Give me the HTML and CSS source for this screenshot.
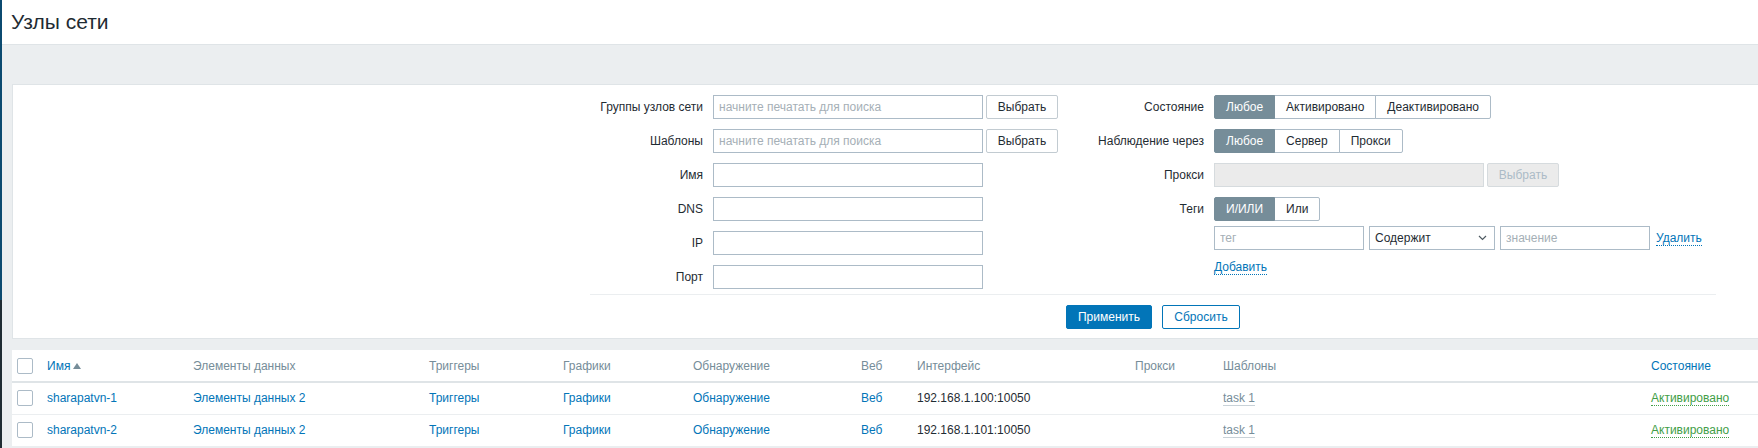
FILE: index.html
```html
<!DOCTYPE html>
<html lang="ru">
<head>
<meta charset="utf-8">
<title>Узлы сети</title>
<link rel="stylesheet" href="styles.css">
</head>
<body>
<div class="app">
  <div class="sidebar-edge"></div>
  <main class="main">
    <header class="page-header"><h1>Узлы сети</h1></header>
    <div class="content">
      <section class="filter">
        <div class="filter-form">
          <div class="filter-cols">
            <div class="col col-left">
              <div class="row"><label class="lbl">Группы узлов сети</label><input class="inp w270" placeholder="начните печатать для поиска"><button class="btn-grey">Выбрать</button></div>
              <div class="row"><label class="lbl">Шаблоны</label><input class="inp w270" placeholder="начните печатать для поиска"><button class="btn-grey">Выбрать</button></div>
              <div class="row"><label class="lbl">Имя</label><input class="inp w270"></div>
              <div class="row"><label class="lbl">DNS</label><input class="inp w270"></div>
              <div class="row"><label class="lbl">IP</label><input class="inp w270"></div>
              <div class="row"><label class="lbl">Порт</label><input class="inp w270"></div>
            </div>
            <div class="col col-right">
              <div class="row"><label class="lbl">Состояние</label>
                <div class="seg"><span class="on">Любое</span><span>Активировано</span><span>Деактивировано</span></div>
              </div>
              <div class="row"><label class="lbl">Наблюдение через</label>
                <div class="seg"><span class="on">Любое</span><span>Сервер</span><span>Прокси</span></div>
              </div>
              <div class="row"><label class="lbl">Прокси</label><input class="inp w270" disabled><button class="btn-grey" disabled>Выбрать</button></div>
              <div class="row row-top"><label class="lbl">Теги</label>
                <div class="tags">
                  <div class="seg"><span class="on">И/ИЛИ</span><span>Или</span></div>
                  <div class="tag-row">
                    <input class="inp w150" placeholder="тег">
                    <div class="select"><span>Содержит</span><svg width="9" height="6" viewBox="0 0 9 6"><path d="M1 1l3.5 3.5L8 1" fill="none" stroke="#4f5b62" stroke-width="1.2"/></svg></div>
                    <input class="inp w150" placeholder="значение">
                    <a class="link-action">Удалить</a>
                  </div>
                  <div class="add-row"><a class="link-action">Добавить</a></div>
                </div>
              </div>
            </div>
          </div>
          <div class="filter-actions">
            <button class="btn-primary">Применить</button>
            <button class="btn-alt">Сбросить</button>
          </div>
        </div>
      </section>

      <table class="list">
        <colgroup>
          <col style="width:30px"><col style="width:146px"><col style="width:236px"><col style="width:134px"><col style="width:130px"><col style="width:168px"><col style="width:56px"><col style="width:218px"><col style="width:88px"><col style="width:428px"><col style="width:200px"><col>
        </colgroup>
        <thead>
          <tr>
            <th><span class="cb"></span></th>
            <th><a class="link">Имя</a><span class="arrow-up"></span></th>
            <th>Элементы данных</th>
            <th>Триггеры</th>
            <th>Графики</th>
            <th>Обнаружение</th>
            <th>Веб</th>
            <th>Интерфейс</th>
            <th>Прокси</th>
            <th>Шаблоны</th>
            <th><a class="link">Состояние</a></th>
            <th></th>
          </tr>
        </thead>
        <tbody>
          <tr>
            <td><span class="cb"></span></td>
            <td><a class="link">sharapatvn-1</a></td>
            <td><a class="link">Элементы данных</a> <span class="count">2</span></td>
            <td><a class="link">Триггеры</a></td>
            <td><a class="link">Графики</a></td>
            <td><a class="link">Обнаружение</a></td>
            <td><a class="link">Веб</a></td>
            <td>192.168.1.100:10050</td>
            <td></td>
            <td><a class="link-grey">task 1</a></td>
            <td><a class="link-green">Активировано</a></td>
            <td></td>
          </tr>
          <tr>
            <td><span class="cb"></span></td>
            <td><a class="link">sharapatvn-2</a></td>
            <td><a class="link">Элементы данных</a> <span class="count">2</span></td>
            <td><a class="link">Триггеры</a></td>
            <td><a class="link">Графики</a></td>
            <td><a class="link">Обнаружение</a></td>
            <td><a class="link">Веб</a></td>
            <td>192.168.1.101:10050</td>
            <td></td>
            <td><a class="link-grey">task 1</a></td>
            <td><a class="link-green">Активировано</a></td>
            <td></td>
          </tr>
        </tbody>
      </table>
    </div>
  </main>
</div>
</body>
</html>
```
FILE: styles.css
```css
* { box-sizing: border-box; }
html, body { margin: 0; height: 100%; overflow: hidden; }
body {
  font-family: "Liberation Sans", Arial, sans-serif;
  font-size: 12px;
  color: #1f2c33;
  background: #ebeef0;
}
.app { display: flex; min-height: 100vh; }
.sidebar-edge {
  width: 2px;
  flex: none;
  background: linear-gradient(#0b4a70 0, #0b4a70 300px, #1f2c33 300px);
}
.main { flex: none; width: 2400px; background: #ebeef0; }

.page-header {
  height: 45px;
  background: #fff;
  border-bottom: 1px solid #dfe4e7;
  display: flex;
  align-items: center;
  padding-left: 9px;
}
.page-header h1 {
  margin: 0;
  font-size: 21px;
  font-weight: normal;
  line-height: 24px;
  color: #1f2c33;
}

.content { padding: 39px 0 0 10px; }

/* filter */
.filter {
  background: #fff;
  border: 1px solid #dfe4e7;
  padding: 5px 0 9px 577px;
  margin-bottom: 11px;
}
.filter-form { width: 1126px; }
.filter-cols { display: flex; border-bottom: 1px solid #ebeef0; }
.col-left { width: 488px; }
.col-right { flex: 1; }
.row {
  display: flex;
  align-items: center;
  padding: 5px 0;
  min-height: 34px;
}
.row-top { align-items: flex-start; }
.row-top .lbl { line-height: 24px; }
.lbl {
  flex: none;
  text-align: right;
  padding-right: 10px;
  white-space: nowrap;
}
.col-left .lbl { width: 123px; }
.col-right .lbl { width: 136px; }

.inp {
  height: 24px;
  border: 1px solid #acbbc7;
  background: #fff;
  font: inherit;
  color: #1f2c33;
  padding: 0 5px;
  margin: 0;
  outline: none;
  border-radius: 0;
}
.inp::placeholder { color: #a5afb6; }
.inp:disabled { background: #ebebeb; border-color: #d6dbde; }
.w270 { width: 270px; }
.w150 { width: 150px; }

button { font: inherit; margin: 0; cursor: pointer; }
.btn-grey {
  height: 24px;
  width: 72px;
  margin-left: 3px;
  border: 1px solid #c2cbd1;
  background: #fff;
  color: #1f2c33;
  border-radius: 2px;
  padding: 0;
}
.btn-grey:disabled { background: #ebebeb; border-color: #d6dbde; color: #acbbc7; }

.seg { display: flex; }
.seg span {
  height: 24px;
  line-height: 22px;
  padding: 0 11px;
  border: 1px solid #acbbc7;
  background: #fff;
  margin-left: -1px;
  white-space: nowrap;
}
.seg span:first-child { margin-left: 0; border-radius: 2px 0 0 2px; }
.seg span:last-child { border-radius: 0 2px 2px 0; }
.seg span.on { background: #768d99; border-color: #768d99; color: #fff; position: relative; }

.tags { display: flex; flex-direction: column; gap: 5px; }
.tag-row { display: flex; align-items: center; gap: 5px; }
.select {
  width: 126px;
  height: 24px;
  border: 1px solid #acbbc7;
  display: flex;
  align-items: center;
  justify-content: space-between;
  padding: 0 5px;
  background: #fff;
}
.select svg { display: block; margin-right: 2px; }
.tag-row .link-action { margin-left: 1px; }
.add-row { height: 24px; display: flex; align-items: center; }

.link-action {
  color: #0275b8;
  border-bottom: 1px dotted #0275b8;
  line-height: 14px;
  cursor: pointer;
}

.filter-actions {
  display: flex;
  justify-content: center;
  gap: 10px;
  padding-top: 10px;
}
.btn-primary {
  height: 24px;
  width: 86px;
  border: 1px solid #0275b8;
  background: #0275b8;
  color: #fff;
  border-radius: 2px;
  padding: 0;
}
.btn-alt {
  height: 24px;
  width: 78px;
  border: 1px solid #0275b8;
  background: #fff;
  color: #0275b8;
  border-radius: 2px;
  padding: 0;
}

/* table */
.list {
  border-collapse: collapse;
  table-layout: fixed;
  width: 2388px;
  background: #fff;
}
.list th, .list td {
  padding: 0 5px;
  height: 32px;
  text-align: left;
  white-space: nowrap;
  font-weight: normal;
  overflow: hidden;
}
.list th { color: #768d99; }
.list thead tr { border-bottom: 2px solid #dfe4e7; }
.list tbody tr { border-bottom: 1px solid #ebeef0; }
.cb {
  display: block;
  width: 16px;
  height: 16px;
  border: 1px solid #acbbc7;
  border-radius: 2px;
  background: #fff;
}
.link { color: #0275b8; cursor: pointer; }
.count { color: #0275b8; }
.arrow-up {
  display: inline-block;
  margin-left: 3px;
  vertical-align: 1px;
  border-left: 4px solid transparent;
  border-right: 4px solid transparent;
  border-bottom: 6px solid #768d99;
}
.link-grey {
  color: #768d99;
  border-bottom: 1px solid #c9d2d8;
  cursor: pointer;
}
.link-green {
  color: #429e47;
  border-bottom: 1px dotted #429e47;
  cursor: pointer;
}
```
